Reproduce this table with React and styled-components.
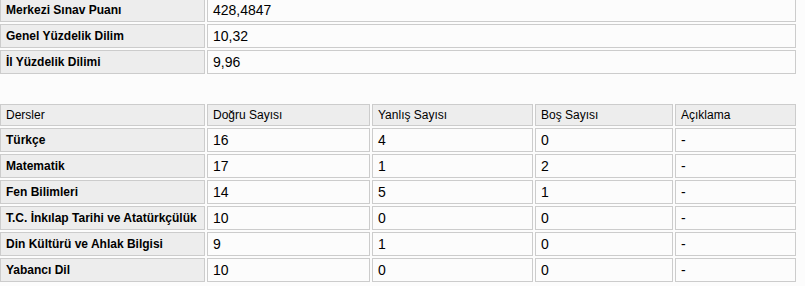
import styled, { createGlobalStyle } from "styled-components";

const GlobalStyle = createGlobalStyle`
  body {
    margin: 0;
    background: #fcfcfc;
    font-family: "Liberation Sans", Arial, sans-serif;
    color: #000;
  }
`;

const Page = styled.div`
  margin: -4px 0 0 -2px;
  display: flex;
  flex-direction: column;
  gap: 26px;
`;

const Table = styled.table`
  border-collapse: separate;
  border-spacing: 2px;
  table-layout: fixed;
  width: 800px;
`;

const Cell = styled.td`
  box-sizing: border-box;
  height: ${(p) => (p.$head ? 22 : 24)}px;
  padding: 0 5px;
  border: 1px solid #cccccc;
  background: ${(p) => (p.$shade ? "#ededed" : "#fcfcfc")};
  font-size: ${(p) => (p.$shade ? 12 : 14)}px;
  font-weight: ${(p) => (p.$bold ? "bold" : "normal")};
  line-height: 1;
  text-align: left;
  vertical-align: middle;
  white-space: nowrap;
  overflow: hidden;
`;

const Col = styled.col`
  width: ${(p) => p.$w}px;
`;

const summary = [
  ["Merkezi Sınav Puanı", "428,4847"],
  ["Genel Yüzdelik Dilim", "10,32"],
  ["İl Yüzdelik Dilimi", "9,96"],
];

const headers = ["Dersler", "Doğru Sayısı", "Yanlış Sayısı", "Boş Sayısı", "Açıklama"];
const widths = [205, 163, 161, 138, 121];

const lessons = [
  ["Türkçe", "16", "4", "0"],
  ["Matematik", "17", "1", "2"],
  ["Fen Bilimleri", "14", "5", "1"],
  ["T.C. İnkılap Tarihi ve Atatürkçülük", "10", "0", "0"],
  ["Din Kültürü ve Ahlak Bilgisi", "9", "1", "0"],
  ["Yabancı Dil", "10", "0", "0"],
];

export default function App() {
  return (
    <>
      <GlobalStyle />
      <Page>
        <Table>
          <colgroup>
            <Col $w={205} />
            <Col $w={589} />
          </colgroup>
          <tbody>
            {summary.map(([label, value]) => (
              <tr key={label}>
                <Cell as="th" $shade $bold>
                  {label}
                </Cell>
                <Cell>{value}</Cell>
              </tr>
            ))}
          </tbody>
        </Table>
        <Table>
          <colgroup>
            {widths.map((w, i) => (
              <Col key={i} $w={w} />
            ))}
          </colgroup>
          <thead>
            <tr>
              {headers.map((h) => (
                <Cell as="th" key={h} $shade $head>
                  {h}
                </Cell>
              ))}
            </tr>
          </thead>
          <tbody>
            {lessons.map(([name, d, y, b]) => (
              <tr key={name}>
                <Cell as="th" $shade $bold>
                  {name}
                </Cell>
                <Cell>{d}</Cell>
                <Cell>{y}</Cell>
                <Cell>{b}</Cell>
                <Cell>-</Cell>
              </tr>
            ))}
          </tbody>
        </Table>
      </Page>
    </>
  );
}
